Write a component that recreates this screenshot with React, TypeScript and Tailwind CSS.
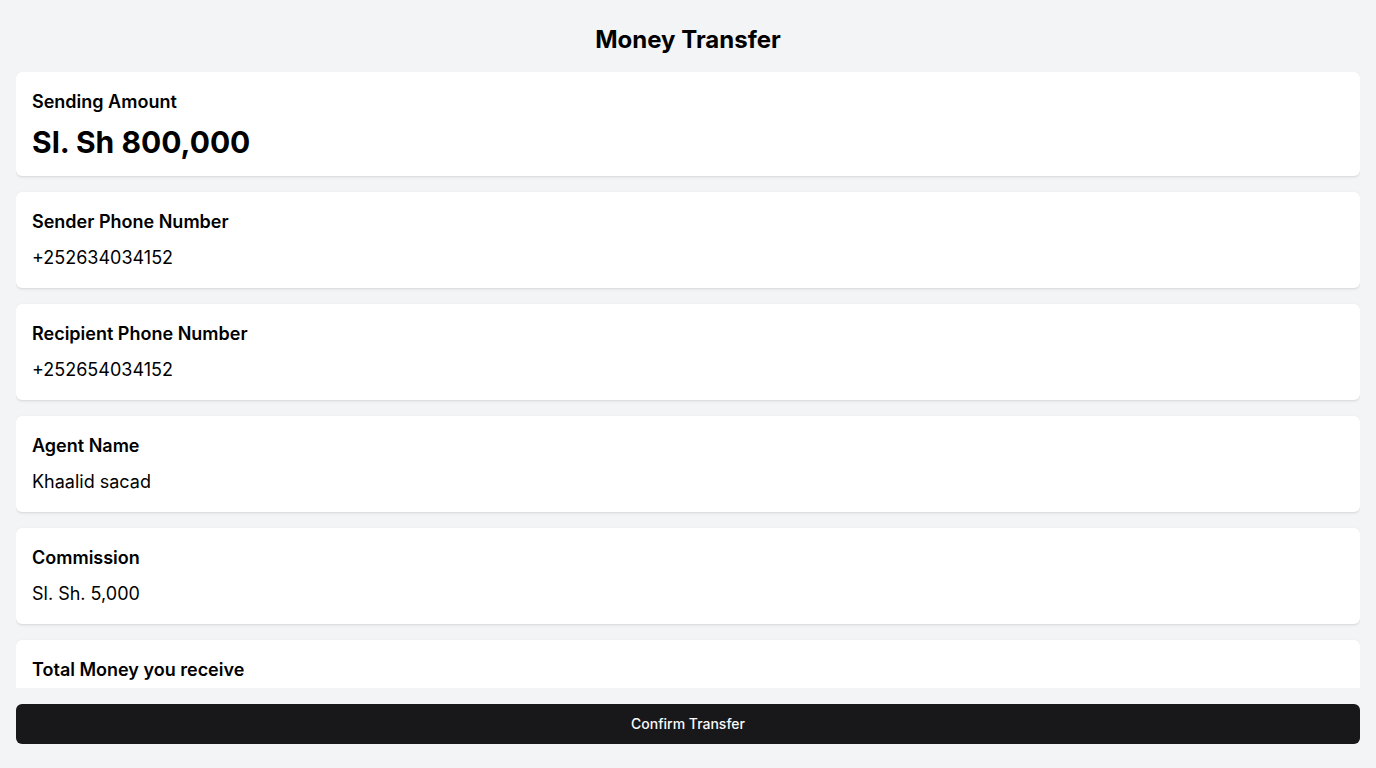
type Detail = { label: string; value: string; large?: boolean };

const details: Detail[] = [
  { label: "Sending Amount", value: "Sl. Sh 800,000", large: true },
  { label: "Sender Phone Number", value: "+252634034152" },
  { label: "Recipient Phone Number", value: "+252654034152" },
  { label: "Agent Name", value: "Khaalid sacad" },
  { label: "Commission", value: "Sl. Sh. 5,000" },
  { label: "Total Money you receive", value: "Sl. Sh. 795,000" },
];

function DetailCard({ label, value, large }: Detail) {
  return (
    <section className="rounded-md bg-white p-4 shadow-sm">
      <h2 className="mb-2 text-lg font-semibold">{label}</h2>
      <p className={large ? "text-3xl font-bold" : "text-lg"}>{value}</p>
    </section>
  );
}

export default function App() {
  return (
    <div className="flex h-screen flex-col bg-gray-100 px-4 pt-6 pb-6 font-['Inter',sans-serif] text-black [font-optical-sizing:none]">
      <h1 className="mb-4 text-center text-2xl font-bold">Money Transfer</h1>
      <main className="min-h-0 flex-1 space-y-4 overflow-y-auto [scrollbar-width:none]">
        {details.map((detail) => (
          <DetailCard key={detail.label} {...detail} />
        ))}
      </main>
      <button
        type="button"
        className="mt-4 h-10 shrink-0 rounded-md bg-[#18181b] px-4 text-sm font-medium text-[#fafafa] hover:bg-[#27272a]"
      >
        Confirm Transfer
      </button>
    </div>
  );
}
